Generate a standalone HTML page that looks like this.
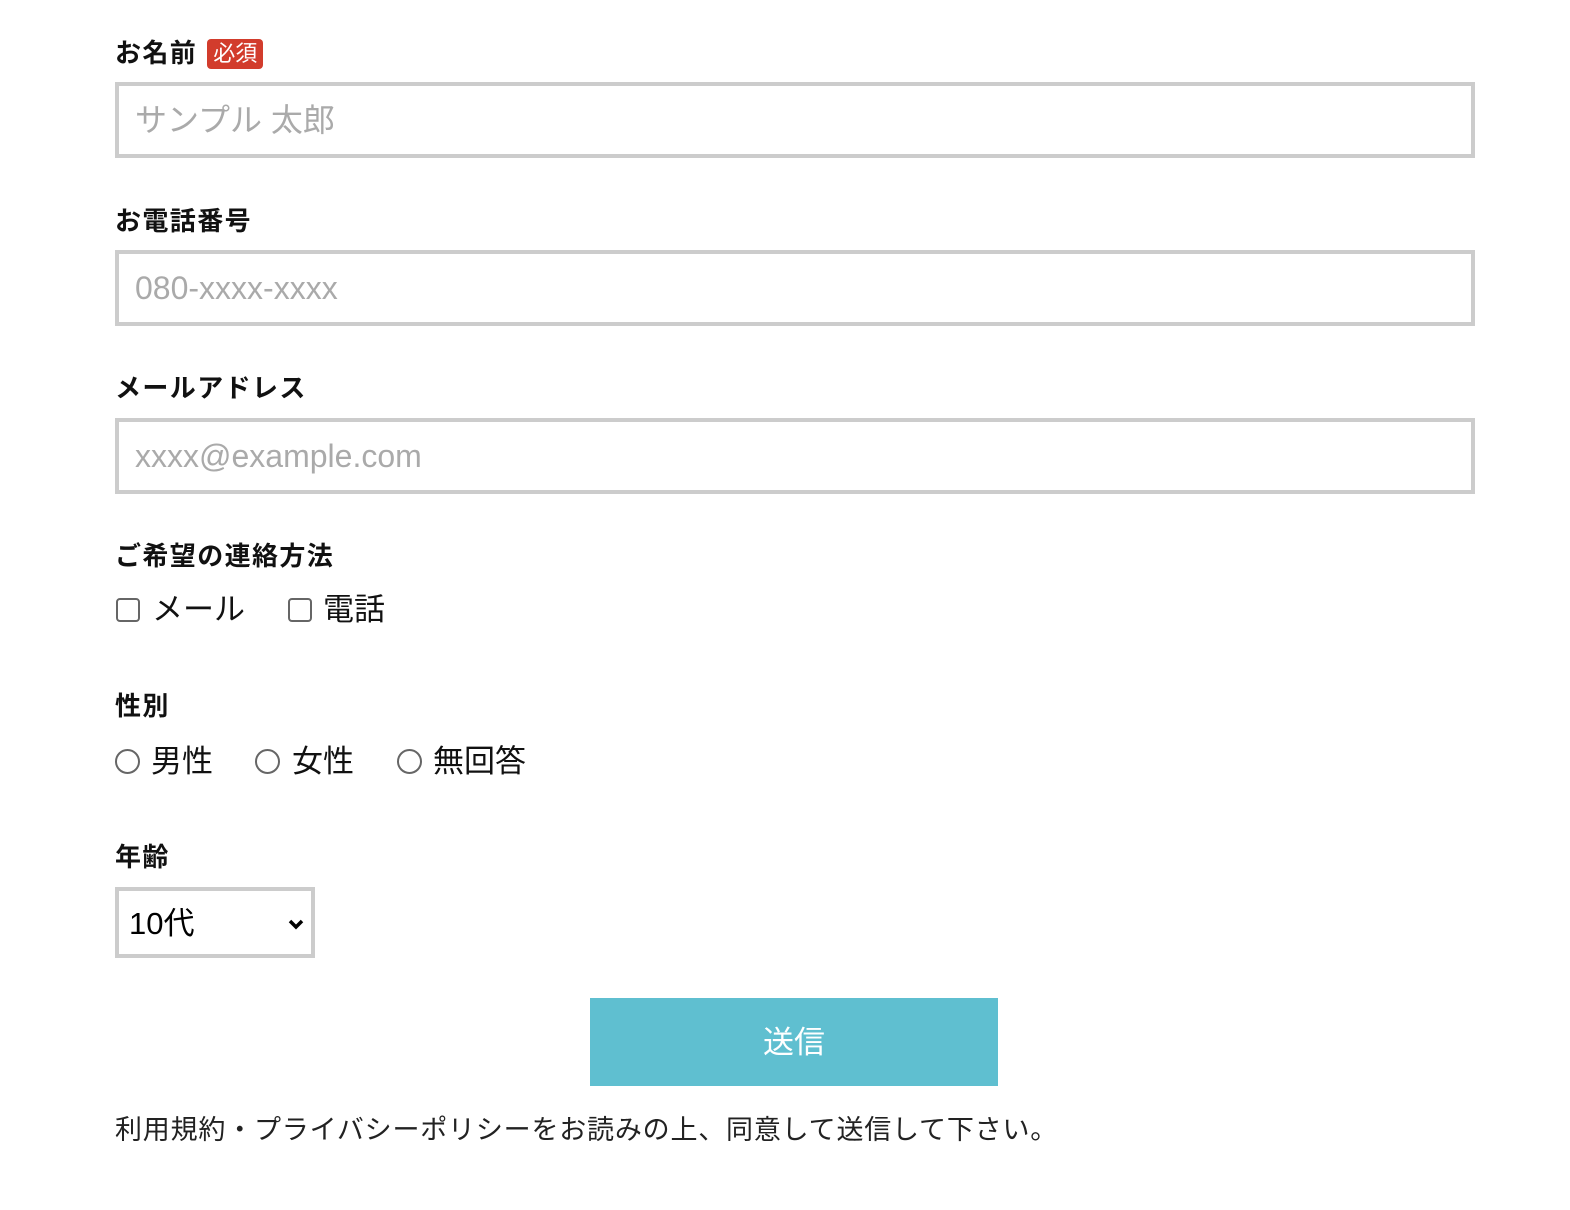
<!DOCTYPE html>
<html><head><meta charset="utf-8"><style>
body{margin:0;background:#fff;width:1570px;height:1210px;position:relative;font-family:"Liberation Sans","Noto Sans CJK JP",sans-serif;color:#111;}
.a{position:absolute;}
.lbl{font-size:26px;font-weight:bold;letter-spacing:1.4px;line-height:30px;}
.inp{left:115px;width:1352px;height:68px;border:4px solid #ccc;box-sizing:content-box;}
.ph{position:absolute;left:16px;top:0;line-height:68px;font-size:32px;color:#aaa;}
.opt{font-size:31px;line-height:36px;}
.cb{position:absolute;width:24px;height:24px;border:2px solid #666;border-radius:4px;box-sizing:border-box;}
.rb{position:absolute;width:25px;height:25px;border:2px solid #666;border-radius:50%;box-sizing:border-box;}
</style></head><body>
<div class="a lbl" style="left:115px;top:38px">お名前<span style="display:inline-block;background:#d23c2c;color:#fff;font-size:22px;font-weight:normal;letter-spacing:0;line-height:30px;padding:0 6px;border-radius:4px;margin-left:10px;vertical-align:1px">必須</span></div>
<div class="a inp" style="top:82px"><span class="ph">サンプル 太郎</span></div>
<div class="a lbl" style="left:115px;top:206px">お電話番号</div>
<div class="a inp" style="top:250px"><span class="ph">080-xxxx-xxxx</span></div>
<div class="a lbl" style="left:115px;top:373px">メールアドレス</div>
<div class="a inp" style="top:418px"><span class="ph">xxxx@example.com</span></div>
<div class="a lbl" style="left:115px;top:541px">ご希望の連絡方法</div>
<div class="cb" style="left:116px;top:598px"></div>
<div class="a opt" style="left:152px;top:592px">メール</div>
<div class="cb" style="left:288px;top:598px"></div>
<div class="a opt" style="left:323px;top:592px">電話</div>
<div class="a lbl" style="left:115px;top:691px">性別</div>
<div class="rb" style="left:115px;top:749px"></div>
<div class="a opt" style="left:151px;top:744px">男性</div>
<div class="rb" style="left:255px;top:749px"></div>
<div class="a opt" style="left:292px;top:744px">女性</div>
<div class="rb" style="left:397px;top:749px"></div>
<div class="a opt" style="left:433px;top:744px">無回答</div>
<div class="a lbl" style="left:115px;top:842px">年齢</div>
<div class="a" style="left:115px;top:887px;width:192px;height:63px;border:4px solid #ccc;box-sizing:content-box">
<span style="position:absolute;left:10px;top:0;line-height:66px;font-size:31px;color:#000">10代</span>
<svg style="position:absolute;left:168px;top:27px" width="18" height="14" viewBox="0 0 18 14"><path d="M3 3 L9 9 L15 3" stroke="#000" stroke-width="3.5" fill="none"/></svg>
</div>
<div class="a" style="left:590px;top:998px;width:408px;height:88px;background:#5fbfd0;color:#fff;font-size:31px;text-align:center;line-height:89px">送信</div>
<div class="a" style="left:115px;top:1112px;font-size:27px;letter-spacing:0.8px;line-height:36px;color:#222">利用規約・プライバシーポリシーをお読みの上、同意して送信して下さい。</div>
</body></html>
